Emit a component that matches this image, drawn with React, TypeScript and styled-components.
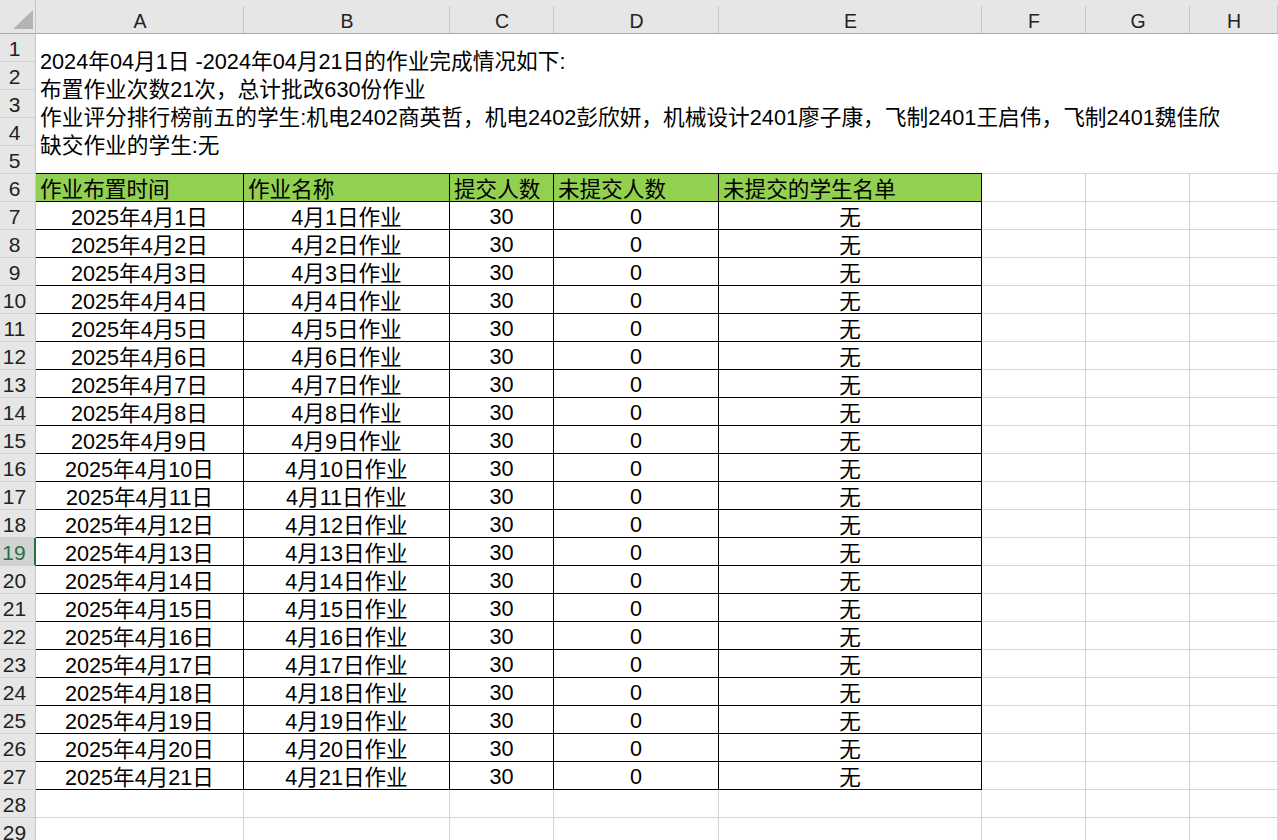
import React from "react";
import styled, { createGlobalStyle, css } from "styled-components";

const GlobalStyle = createGlobalStyle`
  html, body {
    margin: 0;
    padding: 0;
    background: #ffffff;
    overflow: hidden;
  }
  * { box-sizing: border-box; }
`;

const FONT = `"Liberation Sans", "Noto Sans CJK SC", sans-serif`;
const GRID = "#d4d4d4";
const HEAD_BG = "#e6e6e6";
const HEAD_LINE = "#ababab";

const Sheet = styled.div`
  display: grid;
  grid-template-columns: 36px 208px 206px 104px 165px 263px 104px 104px 1fr;
  grid-template-rows: 34px;
  grid-auto-rows: 28px;
  width: 1278px;
  height: 840px;
  overflow: hidden;
  font-family: ${FONT};
  color: #000;
`;

const Corner = styled.div`
  background: ${HEAD_BG};
  border-right: 1px solid #c6c6c6;
  border-bottom: 1px solid ${HEAD_LINE};
  display: flex;
  align-items: flex-end;
  justify-content: flex-end;
  padding: 0 2px 4px 0;
`;

const ColHeader = styled.div`
  background: ${HEAD_BG}
    linear-gradient(#c6c6c6, #c6c6c6) right 6px / 1px calc(100% - 6px) no-repeat;
  border-bottom: 1px solid ${HEAD_LINE};
  display: flex;
  align-items: center;
  justify-content: center;
  font-size: 19.5px;
  color: #222;
  padding-top: 9px;
`;

const RowHeader = styled.div<{ $selected?: boolean }>`
  background: ${HEAD_BG};
  border-right: 1px solid #c6c6c6;
  border-bottom: 1px solid #d0d0d0;
  display: flex;
  align-items: center;
  justify-content: center;
  padding: 2px 6px 0 0;
  font-size: 21px;
  color: #222;
  ${(p) =>
    p.$selected &&
    css`
      background: #d2d2d2;
      color: #217346;
      border-right: 2px solid #217346;
    `}
`;

const Summary = styled.div`
  grid-column: 2 / -1;
  grid-row: span 5;
  border-bottom: 1px solid ${GRID};
  display: flex;
  flex-direction: column;
  justify-content: center;
  padding-left: 4px;
  font-size: 21.7px;
  line-height: 28px;
  white-space: nowrap;
`;

const Line = styled.div`
  height: 28px;
`;

type CellKind = "plain" | "head" | "data";

const Cell = styled.div<{ $kind: CellKind; $latin?: boolean }>`
  border-right: 1px solid ${GRID};
  border-bottom: 1px solid ${GRID};
  display: flex;
  align-items: center;
  font-size: 21.6px;
  white-space: nowrap;
  padding-top: ${(p) => (p.$latin ? "3px" : "0")};
  ${(p) =>
    p.$kind === "head" &&
    css`
      background: #92d050;
      border-right-color: #000;
      border-bottom-color: #000;
      box-shadow: 0 -1px 0 #000;
      justify-content: flex-start;
      padding-left: 4px;
    `}
  ${(p) =>
    p.$kind === "data" &&
    css`
      border-right-color: #000;
      border-bottom-color: #000;
      justify-content: center;
    `}
`;

const Triangle = () => (
  <svg width="20" height="19" viewBox="0 0 20 19" aria-hidden>
    <polygon points="20,0 20,19 0,19" fill="#b4b4b4" />
  </svg>
);

const COLS = ["A", "B", "C", "D", "E", "F", "G", "H"];
const HEADS = ["作业布置时间", "作业名称", "提交人数", "未提交人数", "未提交的学生名单"];

const summary = [
  "2024年04月1日 -2024年04月21日的作业完成情况如下:",
  "布置作业次数21次，总计批改630份作业",
  "作业评分排行榜前五的学生:机电2402商英哲，机电2402彭欣妍，机械设计2401廖子康，飞制2401王启伟，飞制2401魏佳欣",
  "缺交作业的学生:无",
];

const days = Array.from({ length: 21 }, (_, i) => i + 1);
const SELECTED_ROW = 19;

export default function App() {
  const rows: React.ReactNode[] = [];

  rows.push(
    <RowHeader key="r1">1</RowHeader>,
    <Summary key="summary">
      {summary.map((s) => (
        <Line key={s}>{s}</Line>
      ))}
    </Summary>
  );
  for (let r = 2; r <= 5; r++) {
    rows.push(
      <RowHeader key={`r${r}`} style={{ gridColumn: 1 }}>
        {r}
      </RowHeader>
    );
  }

  rows.push(<RowHeader key="r6">6</RowHeader>);
  HEADS.forEach((h) =>
    rows.push(
      <Cell key={`h-${h}`} $kind="head">
        {h}
      </Cell>
    )
  );
  for (let c = 0; c < 3; c++) rows.push(<Cell key={`h-e${c}`} $kind="plain" />);

  days.forEach((d) => {
    const r = d + 6;
    const vals = [`2025年4月${d}日`, `4月${d}日作业`, "30", "0", "无"];
    rows.push(
      <RowHeader key={`r${r}`} $selected={r === SELECTED_ROW}>
        {r}
      </RowHeader>
    );
    vals.forEach((v, i) =>
      rows.push(
        <Cell key={`d${d}-${i}`} $kind="data" $latin={i === 2 || i === 3}>
          {v}
        </Cell>
      )
    );
    for (let c = 0; c < 3; c++) rows.push(<Cell key={`d${d}-e${c}`} $kind="plain" />);
  });

  [28, 29].forEach((r) => {
    rows.push(<RowHeader key={`r${r}`}>{r}</RowHeader>);
    COLS.forEach((c) => rows.push(<Cell key={`e${r}-${c}`} $kind="plain" />));
  });

  return (
    <>
      <GlobalStyle />
      <Sheet>
        <Corner>
          <Triangle />
        </Corner>
        {COLS.map((c) => (
          <ColHeader key={c}>{c}</ColHeader>
        ))}
        {rows}
      </Sheet>
    </>
  );
}
